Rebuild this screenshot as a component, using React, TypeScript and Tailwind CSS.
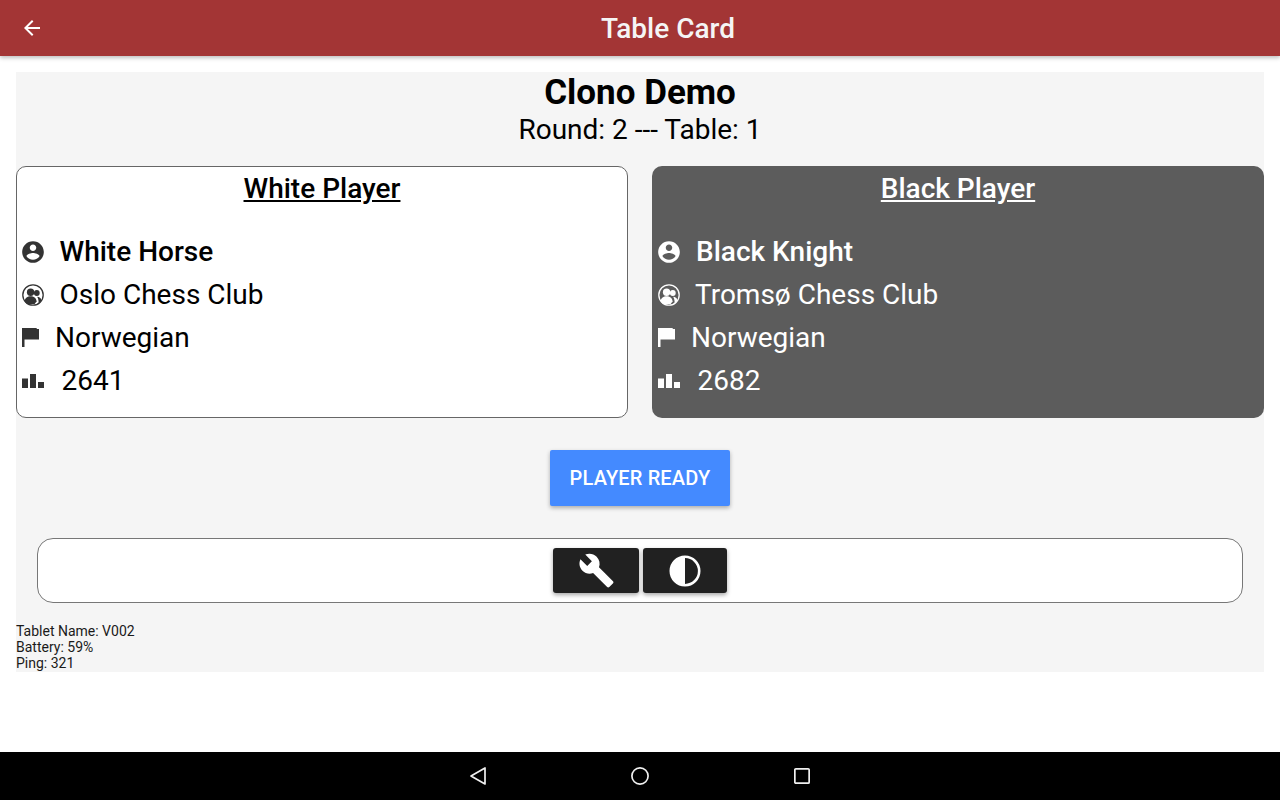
import React from "react";
import { MdArrowBack, MdBuild } from "react-icons/md";

interface Player {
  heading: string;
  name: string;
  club: string;
  nation: string;
  rating: string;
  dark?: boolean;
}

const PersonIcon = () => (
  <svg width="26" height="26" viewBox="0 0 24 24" fill="currentColor">
    <path d="M12 2C6.480 2 2 6.480 2 12s4.480 10 10 10 10-4.480 10-10S17.520 2 12 2zm0 3c1.660 0 3 1.340 3 3s-1.340 3-3 3-3-1.340-3-3 1.340-3 3-3zm0 14.200c-2.500 0-4.710-1.280-6-3.220.03-1.990 4-3.080 6-3.080 1.990 0 5.970 1.090 6 3.080-1.290 1.940-3.500 3.220-6 3.220z" />
  </svg>
);

const ClubIcon = () => (
  <svg width="22" height="22" viewBox="0 0 22 22" fill="currentColor">
    <circle cx="11" cy="11" r="10.2" fill="none" stroke="currentColor" strokeWidth="1.3" />
    <circle cx="8.600" cy="8.200" r="3.700" />
    <circle cx="14.800" cy="9" r="2.900" />
    <path d="M2.600 17.200c.3-3.400 3-5 6-5s5.700 1.600 6 5.200l-2 2.600h-7.500z" />
    <path d="M15.200 12.800c2 .2 4 1.300 4.300 3.600l-2.800 2.800c0-2.400-.4-4.600-1.500-6.400z" />
  </svg>
);

const FlagIcon = () => (
  <svg width="17" height="19" viewBox="0 0 17 19" fill="currentColor">
    <path d="M0 0h14.500l.4 1h2.100v10.500H2.500V19H0z" />
  </svg>
);

const BarsIcon = () => (
  <svg width="22" height="14" viewBox="0 0 22 14" fill="currentColor">
    <rect x="0" y="4.500" width="6" height="9.500" />
    <rect x="8" y="0" width="6" height="14" />
    <rect x="16" y="8" width="6" height="6" />
  </svg>
);

const PlayerCard: React.FC<Player> = ({ heading, name, club, nation, rating, dark }) => {
  const iconColor = dark ? "text-white" : "text-[#333333]";
  return (
    <div
      className={`w-[612px] shrink-0 h-[252px] rounded-[10px] ${
        dark ? "bg-[#5c5c5c] text-white pt-px" : "bg-white text-black border border-[#666666]"
      }`}
    >
      <div className="text-center text-[28px] leading-[44px] font-medium underline">{heading}</div>
      <div className={`mt-[19px] text-[28px] leading-[43px] ${dark ? "pl-[4px]" : "pl-[3px]"}`}>
        <div className="flex items-center font-medium">
          <span className={`${iconColor} w-[26px] shrink-0`}>
            <PersonIcon />
          </span>
          <span className={dark ? "ml-[14px]" : "ml-[13.500px]"}>{name}</span>
        </div>
        <div className="flex items-center">
          <span className={`${iconColor} w-[26px] pl-[2px] shrink-0`}>
            <ClubIcon />
          </span>
          <span className={dark ? "ml-[13px]" : "ml-[13.500px]"}>{club}</span>
        </div>
        <div className="flex items-center">
          <span className={`${iconColor} w-[26px] pl-[2px] shrink-0`}>
            <FlagIcon />
          </span>
          <span className="ml-[9px]">{nation}</span>
        </div>
        <div className="flex items-center">
          <span className={`${iconColor} w-[26px] pl-[2px] shrink-0`}>
            <BarsIcon />
          </span>
          <span className="ml-[15.500px]">{rating}</span>
        </div>
      </div>
    </div>
  );
};

const App: React.FC = () => {
  return (
    <div className="relative w-[1280px] h-[800px] overflow-hidden bg-white font-['Roboto',sans-serif] flex flex-col">
      {/* app bar */}
      <header className="h-14 shrink-0 bg-[#a33535] flex items-center relative shadow-[0_2px_4px_rgba(0,0,0,0.25)]">
        <MdArrowBack size={24} className="text-white ml-5" />
        <div className="absolute left-14 right-0 pt-px text-center text-[28px] font-medium text-[#f5f5f5]">Table Card</div>
      </header>

      <main className="flex-1 pt-4 px-4">
        <div className="h-[600px] bg-[#f5f5f5] flex flex-col">
          <div className="pt-px text-center text-[35px] leading-[40px] font-bold text-black">Clono Demo</div>
          <div className="-mt-px text-center text-[28px] leading-[36px] text-black">Round: 2 --- Table: 1</div>

          <div className="mt-[18px] flex gap-6">
            <PlayerCard heading="White Player" name="White Horse" club="Oslo Chess Club" nation="Norwegian" rating="2641" />
            <PlayerCard heading="Black Player" name="Black Knight" club="Tromsø Chess Club" nation="Norwegian" rating="2682" dark />
          </div>

          <div className="mt-8 flex justify-center">
            <button className="w-[180px] h-14 rounded-[2px] bg-[#448aff] text-white text-[20px] tracking-[0.15px] font-medium shadow-[0_2px_4px_rgba(0,0,0,0.3)]">
              PLAYER READY
            </button>
          </div>

          <div className="mt-[32px] mx-[21px] h-[65px] rounded-[16px] border border-[#777777] bg-white flex justify-center gap-1 pt-[9px]">
            <button className="w-[86px] h-[45px] rounded-[3px] bg-[#212121] flex items-center justify-center shadow-[0_2px_4px_rgba(0,0,0,0.35)]">
              <MdBuild size={37} className="text-white" />
            </button>
            <button className="w-[84px] h-[45px] rounded-[3px] bg-[#212121] flex items-center justify-center shadow-[0_2px_4px_rgba(0,0,0,0.35)]">
              <svg width="32" height="32" viewBox="0 0 32 32">
                <circle cx="16" cy="16" r="14.200" fill="none" stroke="#ffffff" strokeWidth="2.600" />
                <path d="M16 1.500a14.500 14.500 0 0 0 0 29z" fill="#ffffff" />
              </svg>
            </button>
          </div>

          <div className="mt-[20px] text-[14px] leading-4 text-[#1a1a1a]">
            <div>Tablet Name: V002</div>
            <div>Battery: 59%</div>
            <div>Ping: 321</div>
          </div>
        </div>
      </main>

      {/* android nav bar */}
      <footer className="h-12 shrink-0 bg-black flex items-center justify-center gap-[142px] text-[#f0f0f0]">
        <svg width="20" height="20" viewBox="0 0 20 20" fill="none" stroke="currentColor" strokeWidth="1.7" strokeLinejoin="round">
          <path d="M17 2v16L3 10z" />
        </svg>
        <svg width="20" height="20" viewBox="0 0 20 20" fill="none" stroke="currentColor" strokeWidth="1.7">
          <circle cx="10" cy="10" r="8.100" />
        </svg>
        <svg width="20" height="20" viewBox="0 0 20 20" fill="none" stroke="currentColor" strokeWidth="1.7" strokeLinejoin="round">
          <rect x="2.850" y="2.850" width="14.300" height="14.300" rx="1" />
        </svg>
      </footer>
    </div>
  );
};

export default App;
